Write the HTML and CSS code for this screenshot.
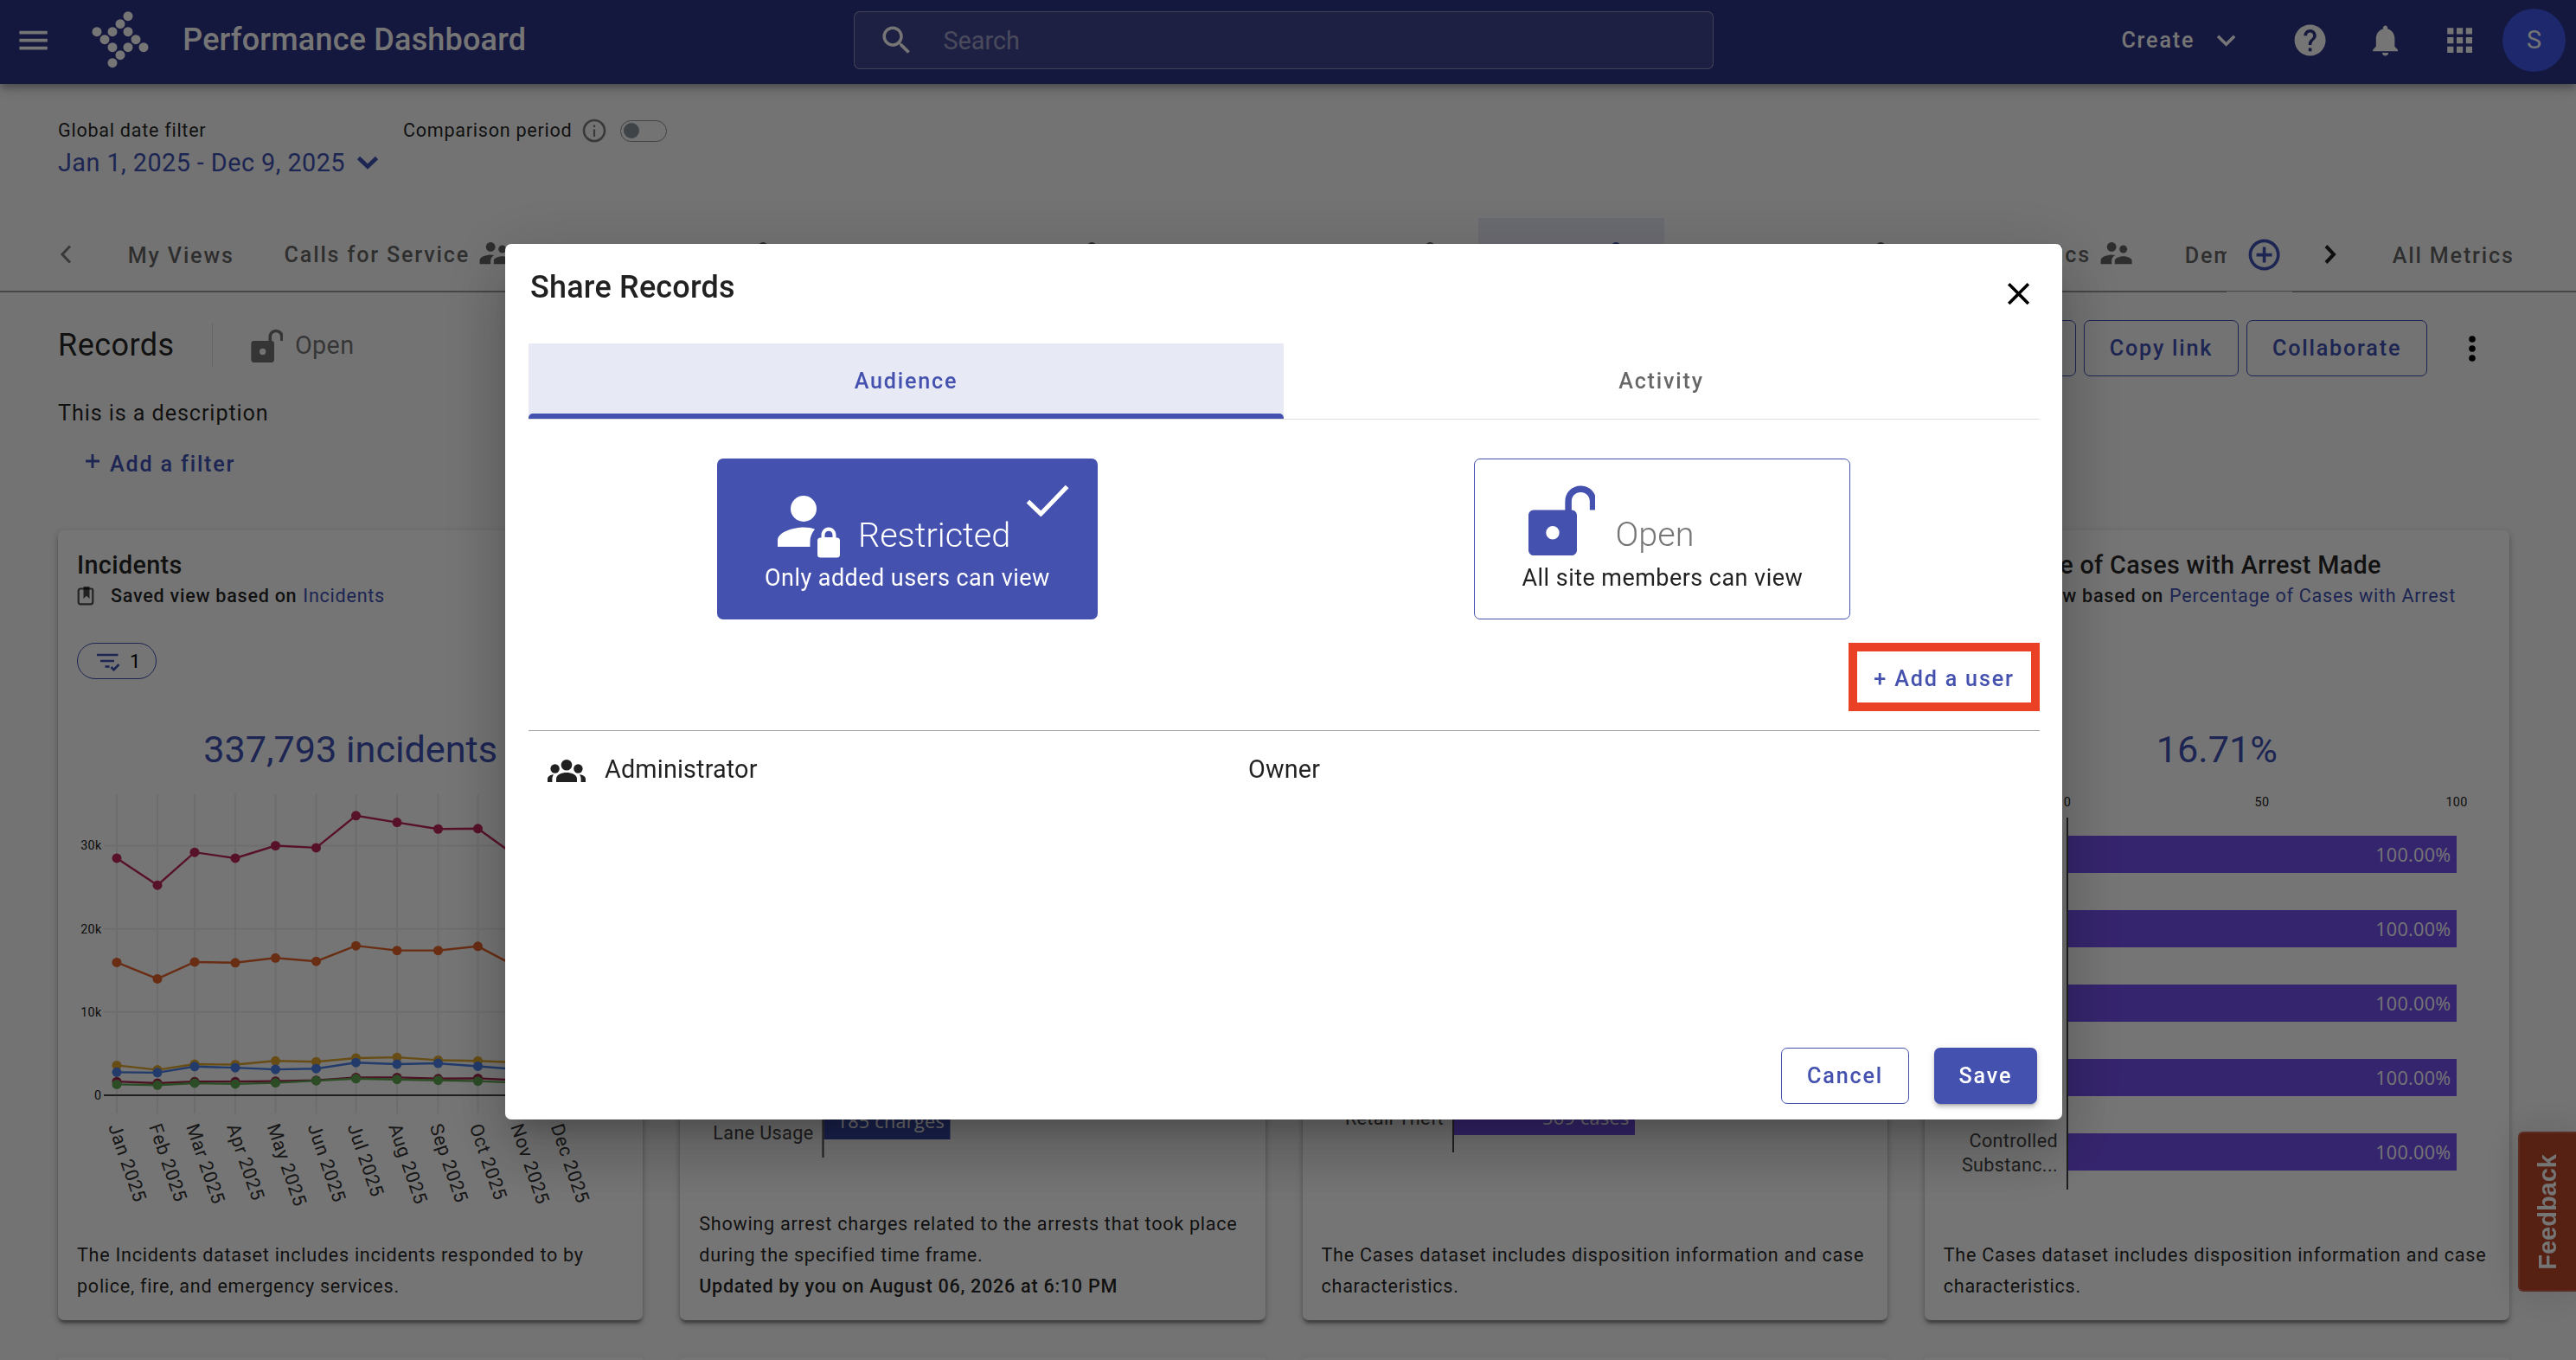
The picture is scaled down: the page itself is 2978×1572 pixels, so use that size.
FILE: index.html
```
<!DOCTYPE html>
<html lang="en">
<head>
<meta charset="UTF-8">
<title>Performance Dashboard</title>
<link rel="stylesheet" href="styles.css">
</head>
<body>

<!-- shared icons -->
<svg class="sprite" width="0" height="0">
  <symbol id="i-people" viewBox="0 0 24 24"><path d="M16.5 12c1.38 0 2.49-1.12 2.49-2.5S17.88 7 16.5 7 14 8.12 14 9.500s1.120 2.500 2.500 2.500zM9 11c1.660 0 2.990-1.340 2.990-3S10.660 5 9 5 6 6.340 6 8s1.340 3 3 3zm7.500 3c-1.830 0-5.500.920-5.500 2.750V19h11v-2.250c0-1.830-3.670-2.750-5.500-2.750zM9 13c-2.330 0-7 1.170-7 3.500V19h7v-2.250c0-.850.330-2.340 2.370-3.470C10.500 13.100 9.660 13 9 13z"/></symbol>
  <symbol id="i-lock-open" viewBox="0 0 48 48"><path d="M38.500 2C32.700 2 28.200 6.500 28.200 12.300V18H7.500C5.600 18 4 19.600 4 21.500v23C4 46.400 5.600 48 7.500 48h25c1.900 0 3.500-1.600 3.500-3.500v-23c0-1.900-1.600-3.500-3.500-3.500V12.300c0-3.400 2.600-6 6-6s6 2.600 6 6V18h4.300v-5.700C48.800 6.500 44.300 2 38.500 2zM20 37.400a4.400 4.400 0 1 1 0-8.800 4.400 4.400 0 0 1 0 8.800z"/></symbol>
  <symbol id="i-down" viewBox="0 0 24 24"><path d="M7.410 8.590 12 13.170l4.590-4.580L18 10l-6 6-6-6z"/></symbol>
</svg>

<header class="topbar">
  <svg class="icon menu" viewBox="0 0 24 24"><path d="M3 18h18v-2H3v2zm0-5h18v-2H3v2zm0-7v2h18V6H3z"/></svg>
  <svg class="logo" viewBox="0 0 68 68">
    <circle cx="42" cy="6.700" r="5.500"/><circle cx="33" cy="15.700" r="5.500"/>
    <circle cx="6" cy="24.700" r="5.500"/><circle cx="24" cy="24.700" r="5.500"/><circle cx="42" cy="24.700" r="5.500"/>
    <circle cx="15" cy="33.700" r="5.500"/><circle cx="51" cy="33.700" r="5.500"/>
    <circle cx="24" cy="42.700" r="5.500"/><circle cx="42" cy="42.700" r="5.500"/><circle cx="60" cy="42.700" r="5.500"/>
    <circle cx="33" cy="51.700" r="5.500"/><circle cx="24" cy="60.700" r="5.500"/>
  </svg>
  <h1 class="app-title">Performance Dashboard</h1>
  <div class="search">
    <svg class="icon" viewBox="0 0 24 24"><path d="M15.500 14h-.79l-.28-.27C15.410 12.590 16 11.110 16 9.500 16 5.910 13.090 3 9.500 3S3 5.910 3 9.500 5.910 16 9.500 16c1.610 0 3.090-.59 4.230-1.570l.27.28v.79l5 4.990L20.490 19l-4.990-5zm-6 0C7.010 14 5 11.990 5 9.500S7.010 5 9.500 5 14 7.010 14 9.500 11.990 14 9.500 14z"/></svg>
    <span>Search</span>
  </div>
  <div class="top-actions">
    <span class="create">Create</span>
    <svg class="icon create-arrow"><use href="#i-down"/></svg>
    <svg class="icon" viewBox="0 0 24 24"><path d="M12 2C6.480 2 2 6.480 2 12s4.480 10 10 10 10-4.480 10-10S17.520 2 12 2zm1 17h-2v-2h2v2zm2.070-7.750l-.9.920C13.450 12.900 13 13.500 13 15h-2v-.5c0-1.100.45-2.100 1.170-2.830l1.240-1.260c.37-.36.59-.86.59-1.410 0-1.100-.9-2-2-2s-2 .9-2 2H8c0-2.210 1.790-4 4-4s4 1.790 4 4c0 .88-.36 1.680-.93 2.250z"/></svg>
    <svg class="icon" viewBox="0 0 24 24"><path d="M12 22c1.100 0 2-.9 2-2h-4c0 1.100.89 2 2 2zm6-6v-5c0-3.070-1.640-5.640-4.500-6.320V4c0-.83-.67-1.500-1.500-1.500s-1.500.67-1.500 1.500v.68C7.630 5.360 6 7.920 6 11v5l-2 2v1h16v-1l-2-2z"/></svg>
    <svg class="icon" viewBox="0 0 24 24"><path d="M4 8h4V4H4v4zm6 12h4v-4h-4v4zm-6 0h4v-4H4v4zm0-6h4v-4H4v4zm6 0h4v-4h-4v4zm6-10v4h4V4h-4zm-6 4h4V4h-4v4zm6 6h4v-4h-4v4zm0 6h4v-4h-4v4z"/></svg>
    <span class="avatar">S</span>
  </div>
</header>

<section class="filters">
  <div class="date-filter">
    <div class="label">Global date filter</div>
    <div class="date-value">Jan 1, 2025 - Dec 9, 2025
      <svg viewBox="0 0 26 16"><path d="M2.500 2.500 13 12.500 23.500 2.500" fill="none" stroke="currentColor" stroke-width="4.600"/></svg>
    </div>
  </div>
  <div class="comparison">
    <span class="label">Comparison period</span>
    <svg class="info" viewBox="0 0 28 28"><circle cx="14" cy="14" r="12" fill="none" stroke="currentColor" stroke-width="2.600"/><path d="M12.900 12.500h2.200V21h-2.200zM12.900 7.500h2.200v2.500h-2.200z" fill="currentColor"/></svg>
    <span class="toggle"></span>
  </div>
</section>

<nav class="tabbar">
  <svg class="nav-arrow prev" viewBox="0 0 14 22"><path d="M12 1.500 3 11l9 9.500" fill="none" stroke="currentColor" stroke-width="3"/></svg>
  <a class="tab my-views">My Views</a>
  <div class="tab-scroller">
    <a class="tab shared" style="width:323px">Calls for Service <svg><use href="#i-people"/></svg></a>
    <a class="tab shared" style="width:315px"><svg><use href="#i-people"/></svg></a>
    <a class="tab shared" style="width:380px"><svg><use href="#i-people"/></svg></a>
    <a class="tab shared" style="width:391px"><svg><use href="#i-people"/></svg></a>
    <a class="tab shared selected" style="width:215px"><svg><use href="#i-people"/></svg></a>
    <a class="tab shared" style="width:306px"><svg><use href="#i-people"/></svg></a>
    <a class="tab shared" style="width:267px">Metrics <svg><use href="#i-people"/></svg></a>
    <a class="tab">Demo</a>
  </div>
  <div class="add-tab">
    <svg viewBox="0 0 24 24"><path d="M13 7h-2v4H7v2h4v4h2v-4h4v-2h-4V7zm-1-5C6.480 2 2 6.480 2 12s4.480 10 10 10 10-4.480 10-10S17.520 2 12 2zm0 18c-4.410 0-8-3.590-8-8s3.590-8 8-8 8 3.590 8 8-3.590 8-8 8z"/></svg>
  </div>
  <svg class="nav-arrow next" viewBox="0 0 14 22"><path d="M2 1.500 11 11l-9 9.500" fill="none" stroke="currentColor" stroke-width="4"/></svg>
  <a class="tab">All Metrics</a>
</nav>

<section class="view-head">
  <div class="view-row">
    <div class="view-title">
      <h2>Records</h2>
      <div class="visibility">
        <svg><use href="#i-lock-open"/></svg>
        <span>Open</span>
      </div>
    </div>
    <div class="view-actions">
      <button class="btn outline">Edit</button>
      <button class="btn outline">Copy link</button>
      <button class="btn outline">Collaborate</button>
      <svg class="more" viewBox="0 0 8 30"><circle cx="4" cy="4" r="3.800"/><circle cx="4" cy="15" r="3.800"/><circle cx="4" cy="26" r="3.800"/></svg>
    </div>
  </div>
  <p class="view-desc">This is a description</p>
  <a class="add-filter"><svg viewBox="0 0 16 16"><path d="M6.600 0h2.800v6.600H16v2.800H9.400V16H6.600V9.400H0V6.600h6.600z"/></svg>Add a filter</a>
</section>

<main class="cards">
  <article class="card">
    <h3>Incidents</h3>
    <div class="based-on">
      <svg viewBox="0 0 20 22"><path d="M4 2.500h12.500a1.800 1.800 0 0 1 1.800 1.800v13.500a2.500 2.500 0 0 1-2.500 2.500H4a2.300 2.300 0 0 1-2.300-2.300V4.800A2.300 2.300 0 0 1 4 2.500z" fill="none" stroke="currentColor" stroke-width="2.200"/><path d="M7.500 0h7v14L11 10.800 7.500 14z" fill="currentColor"/></svg>
      <span>Saved view based on</span> <a>Incidents</a>
    </div>
    <div class="chip-row">
      <span class="chip">
        <svg viewBox="0 0 28 22"><path d="M1 3h24.500M5 10h16" fill="none" stroke="currentColor" stroke-width="2.600"/><path d="M10.500 16.500h5" stroke="currentColor" stroke-width="2.600"/><path d="M17.500 17 20.500 20.200 26.500 14" fill="none" stroke="currentColor" stroke-width="2.600"/></svg>
        1
      </span>
    </div>
    <div class="big-number">337,793 incidents</div>
    <svg class="chart" id="incidents-chart" viewBox="0 0 676 500"></svg>
    <p class="card-desc">The Incidents dataset includes incidents responded to by police, fire, and emergency services.</p>
  </article>

  <article class="card">
    <svg class="chart" id="charges-chart" viewBox="0 0 676 500"></svg>
    <p class="card-desc">Showing arrest charges related to the arrests that took place during the specified time frame.<br><b>Updated by you on August 06, 2026 at 6:10 PM</b></p>
  </article>

  <article class="card">
    <svg class="chart" id="cases-chart" viewBox="0 0 676 500"></svg>
    <p class="card-desc">The Cases dataset includes disposition information and case characteristics.</p>
  </article>

  <article class="card">
    <h3>Percentage of Cases with Arrest Made</h3>
    <div class="based-on">
      <svg viewBox="0 0 20 22"></svg>
      <span>Saved view based on</span> <a>Percentage of Cases with Arrest</a>
    </div>
    <div class="chip-row"></div>
    <div class="big-number">16.71%</div>
    <svg class="chart" id="arrest-chart" viewBox="0 0 676 500"></svg>
    <p class="card-desc">The Cases dataset includes disposition information and case characteristics.</p>
  </article>

  <article class="card next-row"></article>
  <article class="card next-row"></article>
  <article class="card next-row"></article>
  <article class="card next-row"></article>
</main>

<div class="feedback"><span>Feedback</span></div>

<div class="overlay">
  <div class="dialog">
    <div class="dialog-head">
      <h2>Share Records</h2>
      <svg class="close" viewBox="0 0 24 24"><path d="M19 6.410 17.590 5 12 10.590 6.410 5 5 6.410 10.590 12 5 17.590 6.410 19 12 13.410 17.590 19 19 17.590 13.410 12z"/></svg>
    </div>

    <div class="dialog-tabs">
      <div class="dialog-tab active">Audience</div>
      <div class="dialog-tab">Activity</div>
    </div>

    <div class="options">
      <div class="option restricted">
        <svg class="check" viewBox="0 0 48 36"><path d="M2 19 16.500 33 46 2.500" fill="none" stroke="currentColor" stroke-width="5"/></svg>
        <div class="option-top">
          <svg class="option-icon" viewBox="0 0 74 74"><circle cx="31" cy="16" r="15"/><path d="M31 37.500c5 0 9.500.8 13 2.300-3.500 4-5.500 9-5.500 14v6.200H1v-7.500C1 42.500 21 37.500 31 37.500z"/><path d="M69.500 49.500h-1v-3c0-5-3.700-9-8.500-9s-8.500 4-8.500 9v3h-1A3.500 3.500 0 0 0 47 53v16a3.500 3.500 0 0 0 3.500 3.500h19A3.500 3.500 0 0 0 73 69V53a3.500 3.500 0 0 0-3.500-3.500zm-14-.5v-2.500c0-2.700 2-4.700 4.500-4.700s4.500 2 4.500 4.700V49z"/></svg>
          <span>Restricted</span>
        </div>
        <div class="option-text">Only added users can view</div>
      </div>
      <div class="option open">
        <div class="option-top">
          <svg class="option-icon" viewBox="0 0 48 48"><use href="#i-lock-open"/></svg>
          <span>Open</span>
        </div>
        <div class="option-text">All site members can view</div>
      </div>
    </div>

    <div class="add-row"><button class="add-user">+ Add a user</button></div>

    <div class="member">
      <svg viewBox="0 0 44 26"><circle cx="8.600" cy="10.500" r="5.200"/><circle cx="35.400" cy="10.500" r="5.200"/><circle cx="22" cy="6.300" r="7.600" fill="#fff"/><circle cx="22" cy="6.300" r="6.300"/><path d="M10 26v-3.800c0-5 6.500-7.200 12-7.200s12 2.200 12 7.200V26z"/><path d="M0 26v-3.500c0-3 3-4.800 7-5.200-1.100 1.500-1.600 3.200-1.600 5V26zM44 26v-3.500c0-3-3-4.800-7-5.200 1.100 1.500 1.600 3.200 1.600 5V26z"/></svg>
      <span class="member-name">Administrator</span>
      <span>Owner</span>
    </div>

    <div class="dialog-actions">
      <button class="btn outline">Cancel</button>
      <button class="btn primary">Save</button>
    </div>
  </div>
</div>

<script>
  const NS = 'http://www.w3.org/2000/svg';

  function add(svg, tag, attrs, text) {
    const el = document.createElementNS(NS, tag);
    for (const k in attrs) el.setAttribute(k, attrs[k]);
    if (text !== undefined) el.textContent = text;
    svg.appendChild(el);
    return el;
  }

  // Line chart
  const months = ['Jan', 'Feb', 'Mar', 'Apr', 'May', 'Jun', 'Jul', 'Aug', 'Sep', 'Oct', 'Nov', 'Dec'];
  const tickX = [68, 115, 158, 205, 251.5, 298.5, 344.5, 392, 439.5, 485.5, 533, 579.5];
  const yFor = v => 374 - v * 9.617;
  const series = [
    { color: '#be2657', values: [28.5, 25.25, 29.2, 28.5, 30, 29.75, 33.6, 32.8, 32, 32.05, 28.5, 8] },
    { color: '#e4632b', values: [15.97, 13.99, 16.02, 15.93, 16.5, 16.1, 17.97, 17.4, 17.4, 17.9, 15.3, 4] },
    { color: '#e0a92e', values: [3.6, 3.06, 3.74, 3.69, 4.13, 4.03, 4.47, 4.56, 4.22, 4.13, 3.93, 1] },
    { color: '#4a80ea', values: [2.77, 2.72, 3.45, 3.31, 3.11, 3.2, 3.93, 3.74, 3.84, 3.49, 3.1, .8] },
    { color: '#a3264d', values: [1.65, 1.46, 1.65, 1.65, 1.7, 1.8, 2.14, 2.14, 2, 2.04, 1.8, .5] },
    { color: '#5fa652', values: [1.31, 1.22, 1.46, 1.36, 1.5, 1.75, 2, 1.9, 1.8, 1.7, 1.5, .4] }
  ];

  const line = document.getElementById('incidents-chart');
  tickX.forEach((x, i) => {
    add(line, 'line', { class: 'grid', x1: x, x2: x, y1: 26, y2: 395 });
    add(line, 'text', { class: 'month', transform: `translate(${x - 10},410) rotate(71)` }, months[i] + ' 2025');
  });
  [0, 10, 20, 30].forEach(v => {
    add(line, 'line', { class: v ? 'grid' : 'zero', x1: 53, x2: 600, y1: yFor(v), y2: yFor(v) });
    add(line, 'text', { class: 'tick', x: 50.5, y: yFor(v) + 5, 'text-anchor': 'end' }, v ? v + 'k' : '0');
  });
  series.forEach(s => {
    const pts = s.values.map((v, i) => [tickX[i], yFor(v)]);
    add(line, 'polyline', { points: pts.join(' '), fill: 'none', stroke: s.color, 'stroke-width': 2.4 });
    pts.forEach(p => add(line, 'circle', { cx: p[0], cy: p[1], r: 5.5, fill: s.color }));
  });

  // Horizontal bar charts
  function bars(id, axis, top, bottom, color, rows) {
    const svg = document.getElementById(id);
    rows.forEach(r => {
      add(svg, 'rect', { x: axis + 1, y: r.y, width: r.w, height: 43, fill: color });
      add(svg, 'text', { class: 'bar-value', x: axis + r.w - 5.5, y: r.y + (r.dy || 30), 'text-anchor': 'end' }, r.value);
      (r.label || []).forEach((t, i) =>
        add(svg, 'text', { class: 'category', x: axis - 11, y: r.ly + i * 28, 'text-anchor': 'end' }, t));
    });
    add(svg, 'line', { class: 'axis', x1: axis, x2: axis, y1: top, y2: bottom });
    return svg;
  }

  bars('charges-chart', 165.5, 53, 447, '#3949ab', [
    { y: 383, w: 146, value: '185 charges', label: ['Lane Usage'], ly: 425.5 }
  ]);
  bars('cases-chart', 174, 53, 441, '#7550ef', [
    { y: 378, w: 209, value: '569 cases', dy: 31, label: ['Retail Theft'], ly: 409 }
  ]);
  const arrest = bars('arrest-chart', 165, 53, 483, '#7550ef', [
    { y: 74, w: 449, value: '100.00%' },
    { y: 160, w: 449, value: '100.00%' },
    { y: 246, w: 449, value: '100.00%' },
    { y: 332, w: 449, value: '100.00%' },
    { y: 418, w: 449, value: '100.00%', label: ['Controlled', 'Substanc...'], ly: 433.5 }
  ]);
  [0, 50, 100].forEach(v =>
    add(arrest, 'text', { class: 'tick', x: 165 + v * 4.5, y: 40, 'text-anchor': 'middle' }, v));
</script>

</body>
</html>
```
FILE: styles.css
```
* {
  box-sizing: border-box;
}

body {
  margin: 0;
  width: 2978px;
  height: 1572px;
  overflow: hidden;
  background: #fafafa;
  color: rgba(0, 0, 0, .87);
  font-family: Roboto, "Liberation Sans", sans-serif;
  font-size: 25.2px;
}

h1, h2, h3, p {
  margin: 0;
  font-weight: 500;
}

.sprite {
  display: block;
}

.icon {
  width: 43.2px;
  height: 43.2px;
  flex: none;
  fill: currentColor;
}

/* --- top bar --- */
.topbar {
  display: flex;
  align-items: center;
  height: 97px;
  padding: 0 12px 4px 17px;
  background: #2d3287;
  color: #fff;
  box-shadow: 0 4px 7px -2px rgba(0, 0, 0, .2), 0 7px 9px rgba(0, 0, 0, .14), 0 2px 18px rgba(0, 0, 0, .12);
}

.logo {
  width: 68px;
  height: 68px;
  margin: -1px 0 0 46px;
  fill: #fff;
}

.app-title {
  width: 776px;
  margin-left: 37px;
  margin-top: -1px;
  font-size: 36px;
  letter-spacing: .2px;
  line-height: 44px;
}

.search {
  display: flex;
  align-items: center;
  gap: 32px;
  width: 994px;
  height: 67px;
  padding-left: 27px;
  border: 1px solid rgba(255, 255, 255, .4);
  border-radius: 7px;
  background: rgba(255, 255, 255, .1);
  font-size: 28.8px;
}

.search span {
  color: rgba(255, 255, 255, .5);
}

.top-actions {
  display: flex;
  align-items: center;
  margin-left: auto;
}

.top-actions .icon + .icon {
  margin-left: 43px;
}

.create {
  font-weight: 500;
  letter-spacing: 1.8px;
}

.top-actions .create-arrow {
  margin-left: 15px;
  margin-right: 11px;
}

.avatar {
  width: 73px;
  height: 73px;
  margin-left: 28px;
  border-radius: 50%;
  background: #4158ee;
  font-size: 28.8px;
  line-height: 73px;
  text-align: center;
}

/* --- date filters --- */
.filters {
  display: flex;
  height: 155px;
  padding: 36px 67px 0;
}

.label {
  font-size: 21.6px;
  line-height: 36px;
  letter-spacing: .72px;
}

.date-filter {
  width: 399px;
}

.date-value {
  display: flex;
  align-items: center;
  gap: 13px;
  font-size: 28.8px;
  line-height: 38px;
  letter-spacing: .45px;
  color: #3f51b5;
}

.date-value svg {
  width: 26px;
  height: 16px;
}

.comparison {
  display: flex;
  align-items: center;
  height: 36px;
}

.info {
  width: 28px;
  height: 28px;
  margin: 0 16px 0 12px;
  color: rgba(0, 0, 0, .5);
}

.toggle {
  display: flex;
  align-items: center;
  width: 54px;
  height: 25px;
  padding-left: 3px;
  border: 1px solid #8f9297;
  border-radius: 13px;
}

.toggle::before {
  content: "";
  width: 18px;
  height: 18px;
  border-radius: 50%;
  background: #87949b;
}

/* --- view tabs --- */
.tabbar {
  display: flex;
  align-items: center;
  height: 86px;
  border-bottom: 2px solid rgba(0, 0, 0, .38);
}

.nav-arrow {
  width: 14px;
  height: 22px;
  flex: none;
}

.nav-arrow.prev {
  margin: 0 36px 0 69px;
  color: rgba(0, 0, 0, .5);
}

.nav-arrow.next {
  margin: 0 36px 0 37px;
}

.tab {
  flex: none;
  height: 84px;
  padding: 0 28.8px;
  color: rgba(0, 0, 0, .6);
  font-weight: 500;
  letter-spacing: 1.8px;
  line-height: 87px;
  white-space: nowrap;
}

.my-views {
  width: 181px;
}

.tab-scroller {
  display: flex;
  width: 2274px;
  overflow: hidden;
}

.tab.shared {
  display: flex;
  align-items: center;
  justify-content: flex-end;
  gap: 8px;
}

.tab.shared svg {
  width: 43.2px;
  height: 43.2px;
  flex: none;
  margin-top: -3px;
  fill: currentColor;
}

.tab.selected {
  background: #e7e9f5;
  color: #3f51b5;
}

.add-tab {
  display: flex;
  align-items: center;
  justify-content: center;
  width: 76px;
  height: 86px;
  margin-bottom: -2px;
  padding-left: 11px;
  border-bottom: 1px solid #f5f5f5;
}

.add-tab svg {
  width: 43.2px;
  height: 43.2px;
  flex: none;
  fill: #3f51b5;
}

/* --- view header --- */
.view-head {
  height: 275px;
  padding: 0 67px;
}

.view-row {
  display: flex;
  justify-content: space-between;
  height: 121.4px;
}

.view-title {
  display: flex;
  align-items: center;
}

.view-title h2 {
  width: 178px;
  font-size: 36px;
  font-weight: 400;
  letter-spacing: .45px;
}

.visibility {
  display: flex;
  align-items: center;
  gap: 14px;
  height: 50px;
  padding-left: 41px;
  border-left: 1px solid rgba(0, 0, 0, .12);
  color: rgba(0, 0, 0, .54);
  font-size: 28.8px;
  letter-spacing: .3px;
}

.visibility svg {
  width: 40px;
  height: 40px;
  fill: currentColor;
}

.view-actions {
  display: flex;
  align-items: flex-start;
  gap: 9px;
  padding: 32px 49px 0 0;
}

.more {
  width: 8px;
  height: 30px;
  margin: 18px 0 0 39px;
}

.btn {
  height: 65px;
  padding: 0 28.8px;
  border-radius: 7px;
  font: 500 25.2px Roboto, "Liberation Sans", sans-serif;
  letter-spacing: 1.8px;
}

.btn.outline {
  border: 1px solid #3f51b5;
  background: none;
  color: #3f51b5;
}

.btn.primary {
  border: 0;
  background: #4451ae;
  color: #fff;
  box-shadow: 0 5px 2px -4px rgba(0, 0, 0, .2), 0 4px 4px rgba(0, 0, 0, .14), 0 2px 9px rgba(0, 0, 0, .12);
}

.view-desc {
  font-weight: 400;
  line-height: 37px;
  letter-spacing: .9px;
}

.add-filter {
  display: flex;
  align-items: center;
  gap: 12px;
  height: 65px;
  margin-top: 7.5px;
  padding-left: 32px;
  color: #3f51b5;
  font-weight: 500;
  letter-spacing: 1.8px;
}

.add-filter svg {
  width: 16px;
  height: 16px;
  margin-top: -6px;
  fill: currentColor;
}

/* --- cards --- */
.cards {
  display: grid;
  grid-template-columns: repeat(4, 1fr);
  grid-template-rows: 913px 3px;
  gap: 43px;
  padding: 0 77px 0 67px;
}

.card {
  display: flex;
  flex-direction: column;
  min-width: 0;
  padding: 22px 22px 21.5px;
  border-radius: 7px;
  background: #fff;
  box-shadow: 0 5px 3px -2px rgba(0, 0, 0, .25), 0 4px 5px rgba(0, 0, 0, .2), 0 2px 9px rgba(0, 0, 0, .16);
}

.card.next-row {
  padding: 0;
  border-radius: 7px 7px 0 0;
}

.card h3 {
  font-size: 28.8px;
  line-height: 36px;
  letter-spacing: .33px;
  white-space: nowrap;
}

.based-on {
  display: flex;
  align-items: center;
  gap: 7px;
  height: 35px;
  font-size: 21.6px;
  letter-spacing: .72px;
  white-space: nowrap;
}

.based-on svg {
  width: 20px;
  height: 22px;
  margin-right: 12px;
  color: rgba(0, 0, 0, .7);
}

.based-on span {
  font-weight: 500;
}

.based-on a {
  color: #3f51b5;
}

.chip-row {
  height: 42px;
  margin: 37px 0 57px;
}

.chip {
  display: inline-flex;
  align-items: center;
  gap: 11px;
  width: 92px;
  height: 42px;
  padding-left: 21px;
  border: 1px solid #3f51b5;
  border-radius: 21px;
  color: #000;
  font-size: 22px;
}

.chip svg {
  width: 28px;
  height: 22px;
  margin-top: 2px;
  color: #3f51b5;
}

.big-number {
  color: #3f51b5;
  font-size: 43.2px;
  line-height: 50px;
  text-align: center;
}

.chart {
  width: 676px;
  height: 500px;
  margin: 0 -22px;
  flex: none;
  overflow: visible;
}

/* cards whose heading stays behind the dialog */
.card > .chart:first-child {
  margin-top: 256px;
}

.card-desc {
  margin-top: auto;
  font-size: 21.6px;
  font-weight: 400;
  line-height: 36px;
  letter-spacing: .72px;
}

.card-desc b {
  font-weight: 500;
}

.grid {
  stroke: #eee;
  stroke-width: 2;
}

.zero {
  stroke: #444;
  stroke-width: 2;
}

.axis {
  stroke: #444;
  stroke-width: 2;
}

.tick {
  font-size: 14.4px;
  fill: #222;
  letter-spacing: .3px;
}

.month {
  font-size: 21.6px;
  fill: #333;
  letter-spacing: .6px;
}

.category {
  font-size: 21.6px;
  fill: #444;
  letter-spacing: .36px;
}

.bar-value {
  font-family: "Open Sans", Roboto, sans-serif;
  font-size: 21.6px;
  letter-spacing: .3px;
  fill: #fff;
}

/* --- feedback button --- */
.feedback {
  position: fixed;
  right: 0;
  top: 1308px;
  display: flex;
  align-items: center;
  justify-content: center;
  width: 67px;
  height: 185px;
  border: 2px solid #c9644c;
  border-right: 0;
  border-radius: 6px 0 0 6px;
  background: #bb462b;
  color: #fff;
  box-shadow: 0 0 50px rgba(0, 0, 0, .16);
}

.feedback span {
  font: bold 29px "Liberation Sans", Arial, sans-serif;
  writing-mode: vertical-rl;
  transform: rotate(180deg);
}

/* --- share dialog --- */
.overlay {
  position: fixed;
  inset: 0;
  padding: 282px 0 0 584px;
  background: rgba(0, 0, 0, .54);
}

.dialog {
  display: flex;
  flex-direction: column;
  width: 1800px;
  height: 1012px;
  padding: 0 27px 18px;
  border-radius: 7px;
  background: #fff;
  box-shadow: 0 20px 27px -13px rgba(0, 0, 0, .2), 0 43px 68px 5px rgba(0, 0, 0, .14), 0 16px 83px 14px rgba(0, 0, 0, .12);
}

.dialog-head {
  display: flex;
  justify-content: space-between;
  height: 115px;
  padding: 0 2px;
}

.dialog-head h2 {
  font-size: 36px;
  line-height: 101px;
  letter-spacing: .2px;
}

.close {
  width: 43.2px;
  height: 43.2px;
  margin-top: 36px;
}

.dialog-tabs {
  display: flex;
  height: 88px;
  border-bottom: 1px solid #ddd;
}

.dialog-tab {
  flex: 1;
  color: rgba(0, 0, 0, .6);
  font-weight: 500;
  letter-spacing: 1.8px;
  line-height: 87px;
  text-align: center;
}

.dialog-tab.active {
  display: flex;
  flex-direction: column;
  background: #e7e9f5;
  color: #4451ae;
}

.dialog-tab.active::after {
  content: "";
  height: 6px;
  margin-top: -6px;
  border-radius: 5px 5px 0 0;
  background: #4451ae;
}

.options {
  display: grid;
  grid-template-columns: 1fr 1fr;
  justify-items: center;
  padding: 45px 0 0 2px;
}

.option {
  position: relative;
  height: 186px;
  border-radius: 7px;
}

.option.restricted {
  width: 440px;
  padding: 40px 0 0 67px;
  background: #4451ae;
  color: #fff;
}

.option.open {
  width: 435px;
  padding: 27px 0 0 55px;
  border: 1px solid #4451ae;
}

.option-top {
  display: flex;
}

.option-top span {
  align-self: flex-end;
  font-size: 39.6px;
  font-weight: 300;
  line-height: 46px;
}

.option-icon {
  width: 74px;
  height: 74px;
  fill: currentColor;
}

.restricted .option-icon {
  margin: 2px 20px 0 2px;
}

.restricted .option-top span {
  margin-bottom: 4px;
}

.open .option-icon {
  width: 84px;
  height: 84px;
  margin-right: 24px;
  fill: #4451ae;
}

.open .option-top span {
  margin-bottom: 1px;
  color: rgba(0, 0, 0, .54);
}

.option-text {
  margin-top: 6px;
  font-size: 27px;
  letter-spacing: .45px;
  white-space: nowrap;
}

.restricted .option-text {
  margin-left: -12px;
}

.open .option-text {
  margin-top: 10px;
}

.check {
  position: absolute;
  top: 30px;
  right: 33px;
  width: 50px;
  height: 37px;
}

.add-row {
  display: flex;
  justify-content: flex-end;
  height: 129px;
  margin-right: -1px;
  padding-top: 27px;
  border-bottom: 1px solid #a0a0a0;
}

.add-user {
  width: 221px;
  height: 79px;
  padding: 3px 0 0;
  border: 10px solid #ea4025;
  background: #fff;
  color: #4451ae;
  font: 500 25.2px Roboto, "Liberation Sans", sans-serif;
  letter-spacing: 1.8px;
}

.member {
  display: flex;
  align-items: center;
  height: 88px;
  padding-left: 22px;
  font-size: 28.8px;
  letter-spacing: .15px;
}

.member svg {
  width: 44px;
  height: 26px;
  margin-top: 4px;
  fill: #212121;
}

.member-name {
  width: 744px;
  margin-left: 22px;
}

.dialog-actions {
  display: flex;
  justify-content: flex-end;
  gap: 29px;
  margin: auto 2px 0 0;
}

.dialog-actions .outline {
  border-color: #4451ae;
  color: #4451ae;
}
```
